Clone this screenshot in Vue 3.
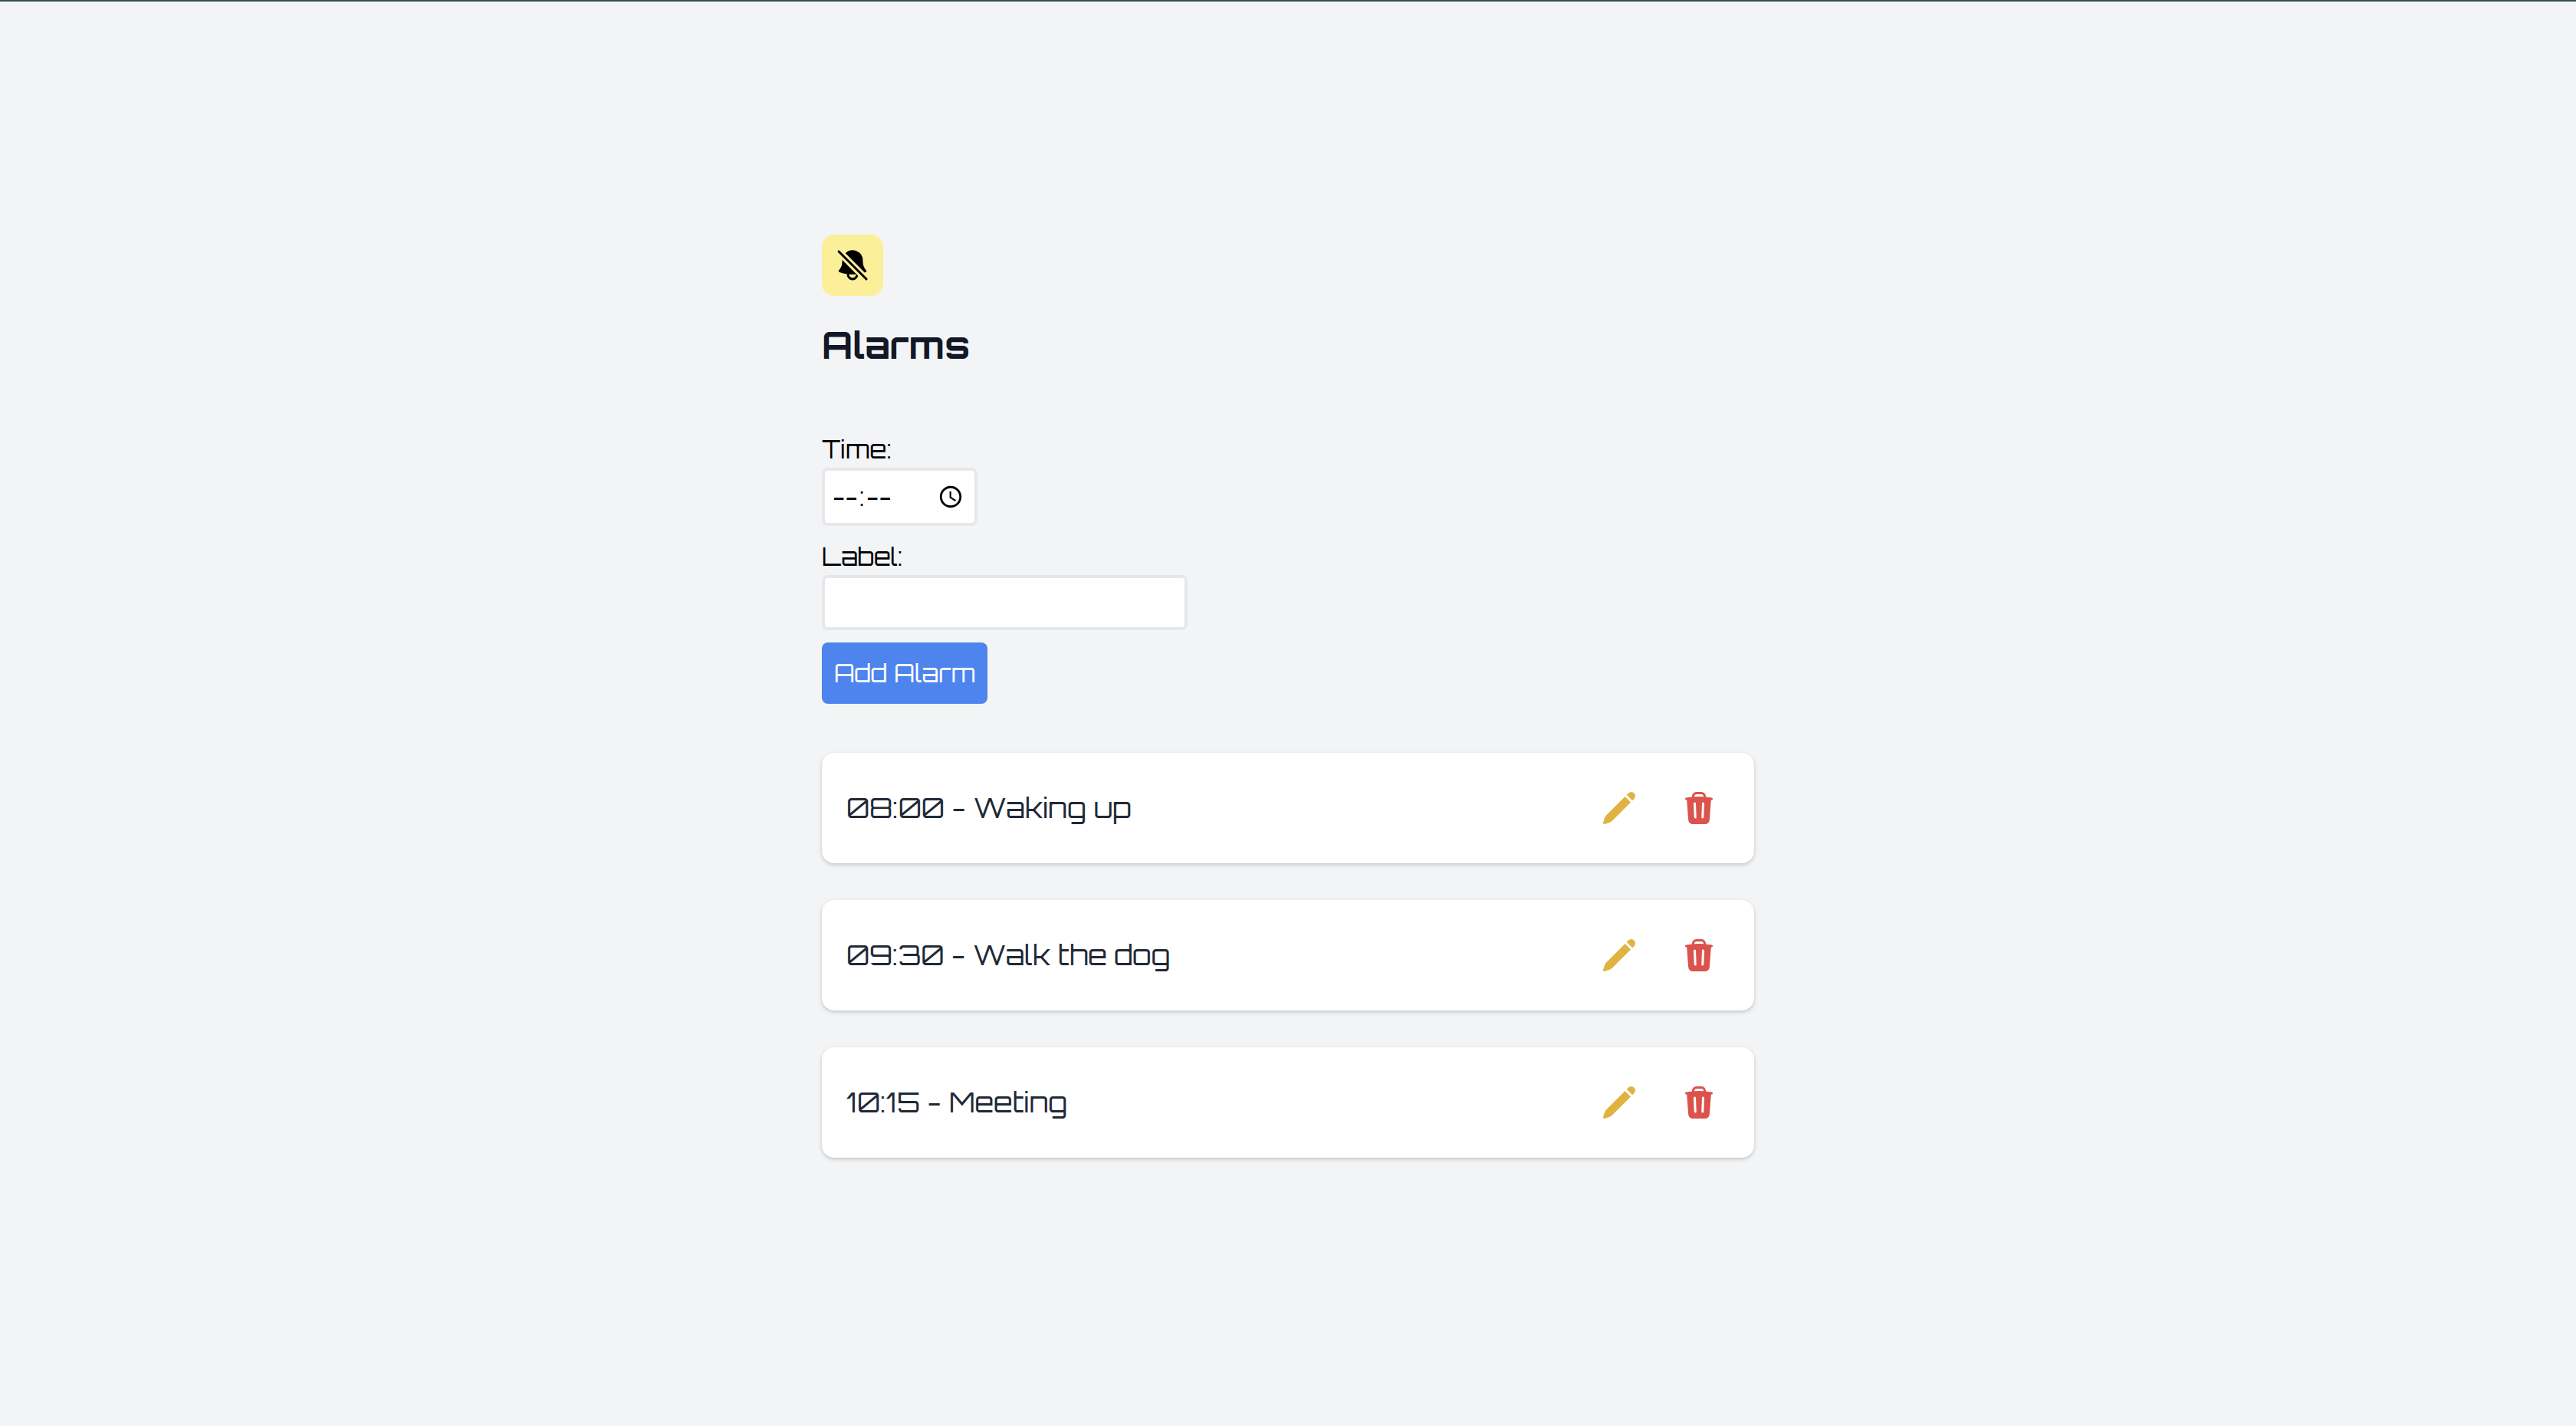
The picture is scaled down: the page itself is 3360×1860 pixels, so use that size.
<script setup>
import { ref } from 'vue'

const time = ref('')
const label = ref('')
const alarms = ref([
  { id: 1, time: '08:00', label: 'Waking up' },
  { id: 2, time: '09:30', label: 'Walk the dog' },
  { id: 3, time: '10:15', label: 'Meeting' },
])

function addAlarm() {
  if (!time.value) return
  alarms.value.push({ id: Date.now(), time: time.value, label: label.value })
  time.value = ''
  label.value = ''
}

function editAlarm(alarm) {
  time.value = alarm.time
  label.value = alarm.label
  removeAlarm(alarm.id)
}

function removeAlarm(id) {
  alarms.value = alarms.value.filter((alarm) => alarm.id !== id)
}
</script>

<template>
  <main class="page">
    <div class="container">
      <span class="badge">
        <svg class="icon" viewBox="0 0 24 24" fill="currentColor" aria-hidden="true">
          <path d="M3.53 2.47a.75.75 0 0 0-1.06 1.06l18 18a.75.75 0 1 0 1.06-1.06l-18-18ZM20.57 16.476c-.223.082-.448.161-.674.238L7.319 4.137A6.75 6.75 0 0 1 18.75 9v.75c0 2.123.8 4.057 2.118 5.52a.75.75 0 0 1-.297 1.206Z" />
          <path fill-rule="evenodd" d="M5.25 9c0-.184.007-.366.022-.546l10.384 10.384a3.751 3.751 0 0 1-7.396-1.119 24.585 24.585 0 0 1-4.831-1.244.75.75 0 0 1-.298-1.205A8.217 8.217 0 0 0 5.25 9.75V9Zm4.502 8.9a2.25 2.25 0 1 0 4.496 0 25.057 25.057 0 0 1-4.496 0Z" clip-rule="evenodd" />
        </svg>
      </span>
      <h1 class="title">Alarms</h1>

      <form class="form" @submit.prevent="addAlarm">
        <label for="time">Time:</label>
        <input id="time" v-model="time" class="field time" type="time" />
        <label for="label">Label:</label>
        <input id="label" v-model="label" class="field text" type="text" />
        <button class="submit" type="submit">Add Alarm</button>
      </form>

      <ul class="alarms">
        <li v-for="alarm in alarms" :key="alarm.id" class="card">
          <span class="name">{{ alarm.time }} - {{ alarm.label }}</span>
          <div class="actions">
            <button class="action edit" type="button" aria-label="Edit" @click="editAlarm(alarm)">
              <svg class="icon" viewBox="0 0 24 24" fill="currentColor" aria-hidden="true">
                <path d="M21.731 2.269a2.625 2.625 0 0 0-3.712 0l-1.157 1.157 3.712 3.712 1.157-1.157a2.625 2.625 0 0 0 0-3.712ZM19.513 8.199l-3.712-3.712-12.15 12.15a5.25 5.25 0 0 0-1.32 2.214l-.8 2.685a.75.75 0 0 0 .933.933l2.685-.8a5.25 5.25 0 0 0 2.214-1.32L19.513 8.2Z" />
              </svg>
            </button>
            <button class="action delete" type="button" aria-label="Delete" @click="removeAlarm(alarm.id)">
              <svg class="icon" viewBox="0 0 24 24" fill="currentColor" aria-hidden="true">
                <path fill-rule="evenodd" d="M16.5 4.478v.227a48.816 48.816 0 0 1 3.878.512.75.75 0 1 1-.256 1.478l-.209-.035-1.005 13.07a3 3 0 0 1-2.991 2.77H8.084a3 3 0 0 1-2.991-2.77L4.087 6.66l-.209.035a.75.75 0 0 1-.256-1.478A48.567 48.567 0 0 1 7.5 4.705v-.227c0-1.564 1.213-2.9 2.816-2.951a52.662 52.662 0 0 1 3.369 0c1.603.051 2.815 1.387 2.815 2.951Zm-6.136-1.452a51.196 51.196 0 0 1 3.273 0C14.39 3.05 15 3.684 15 4.478v.113a49.488 49.488 0 0 0-6 0v-.113c0-.794.609-1.428 1.364-1.452Zm-.355 5.945a.75.75 0 1 0-1.5.058l.347 9a.75.75 0 1 0 1.499-.058l-.346-9Zm5.48.058a.75.75 0 1 0-1.498-.058l-.347 9a.75.75 0 0 0 1.5.058l.345-9Z" clip-rule="evenodd" />
              </svg>
            </button>
          </div>
        </li>
      </ul>
    </div>
  </main>
</template>

<style>
body {
  background: #f3f4f6;
}
</style>

<style scoped>
.page {
  border-top: 2px solid #374f47;
  padding: 304px 32px;
  font-family: Orbitron, "DejaVu Sans", sans-serif;
  font-size: 32px;
  line-height: 48px;
  color: #000;
}

.container {
  max-width: 1216px;
  margin: 0 auto;
}

.badge {
  display: flex;
  width: 48px;
  padding: 16px;
  border-radius: 16px;
  background: #fcef9a;
}

.icon {
  display: block;
  width: 48px;
  height: 48px;
}

.title {
  margin: 32px 0 80px;
  font-size: 48px;
  line-height: 64px;
  font-weight: 700;
  color: #121826;
}

.form {
  display: flex;
  flex-direction: column;
  align-items: flex-start;
}

.field {
  box-sizing: border-box;
  margin: 0 0 16px;
  border: 4px solid #e5e7eb;
  border-radius: 8px;
  background: #fff;
  color: #000;
  font: inherit;
}

.time {
  width: 203px;
  height: 76px;
  padding: 0 14px 0 8px;
}

.time::-webkit-datetime-edit-hour-field,
.time::-webkit-datetime-edit-minute-field {
  padding: 0 2px;
}

.time::-webkit-datetime-edit-ampm-field {
  display: none;
}

.time::-webkit-calendar-picker-indicator {
  width: 34px;
  height: 34px;
  margin: 0;
  padding: 0;
}

.text {
  width: 477px;
  height: 72px;
  padding: 0 8px;
}

.submit {
  padding: 16px;
  border: 0;
  border-radius: 8px;
  background: #4d84ee;
  color: #fff;
  font: inherit;
}

.alarms {
  display: flex;
  flex-direction: column;
  gap: 48px;
  margin: 64px 0 0;
  padding: 0;
  list-style: none;
}

.card {
  display: flex;
  align-items: center;
  justify-content: space-between;
  padding: 32px;
  border-radius: 16px;
  background: #fff;
  box-shadow: 0 2px 6px rgba(0, 0, 0, 0.1), 0 2px 4px rgba(0, 0, 0, 0.1);
}

.name {
  font-size: 36px;
  color: #212936;
}

.actions {
  display: flex;
  gap: 24px;
}

.action {
  padding: 16px;
  border: 0;
  background: none;
}

.edit {
  color: #e0b341;
}

.delete {
  color: #dc524c;
}
</style>
